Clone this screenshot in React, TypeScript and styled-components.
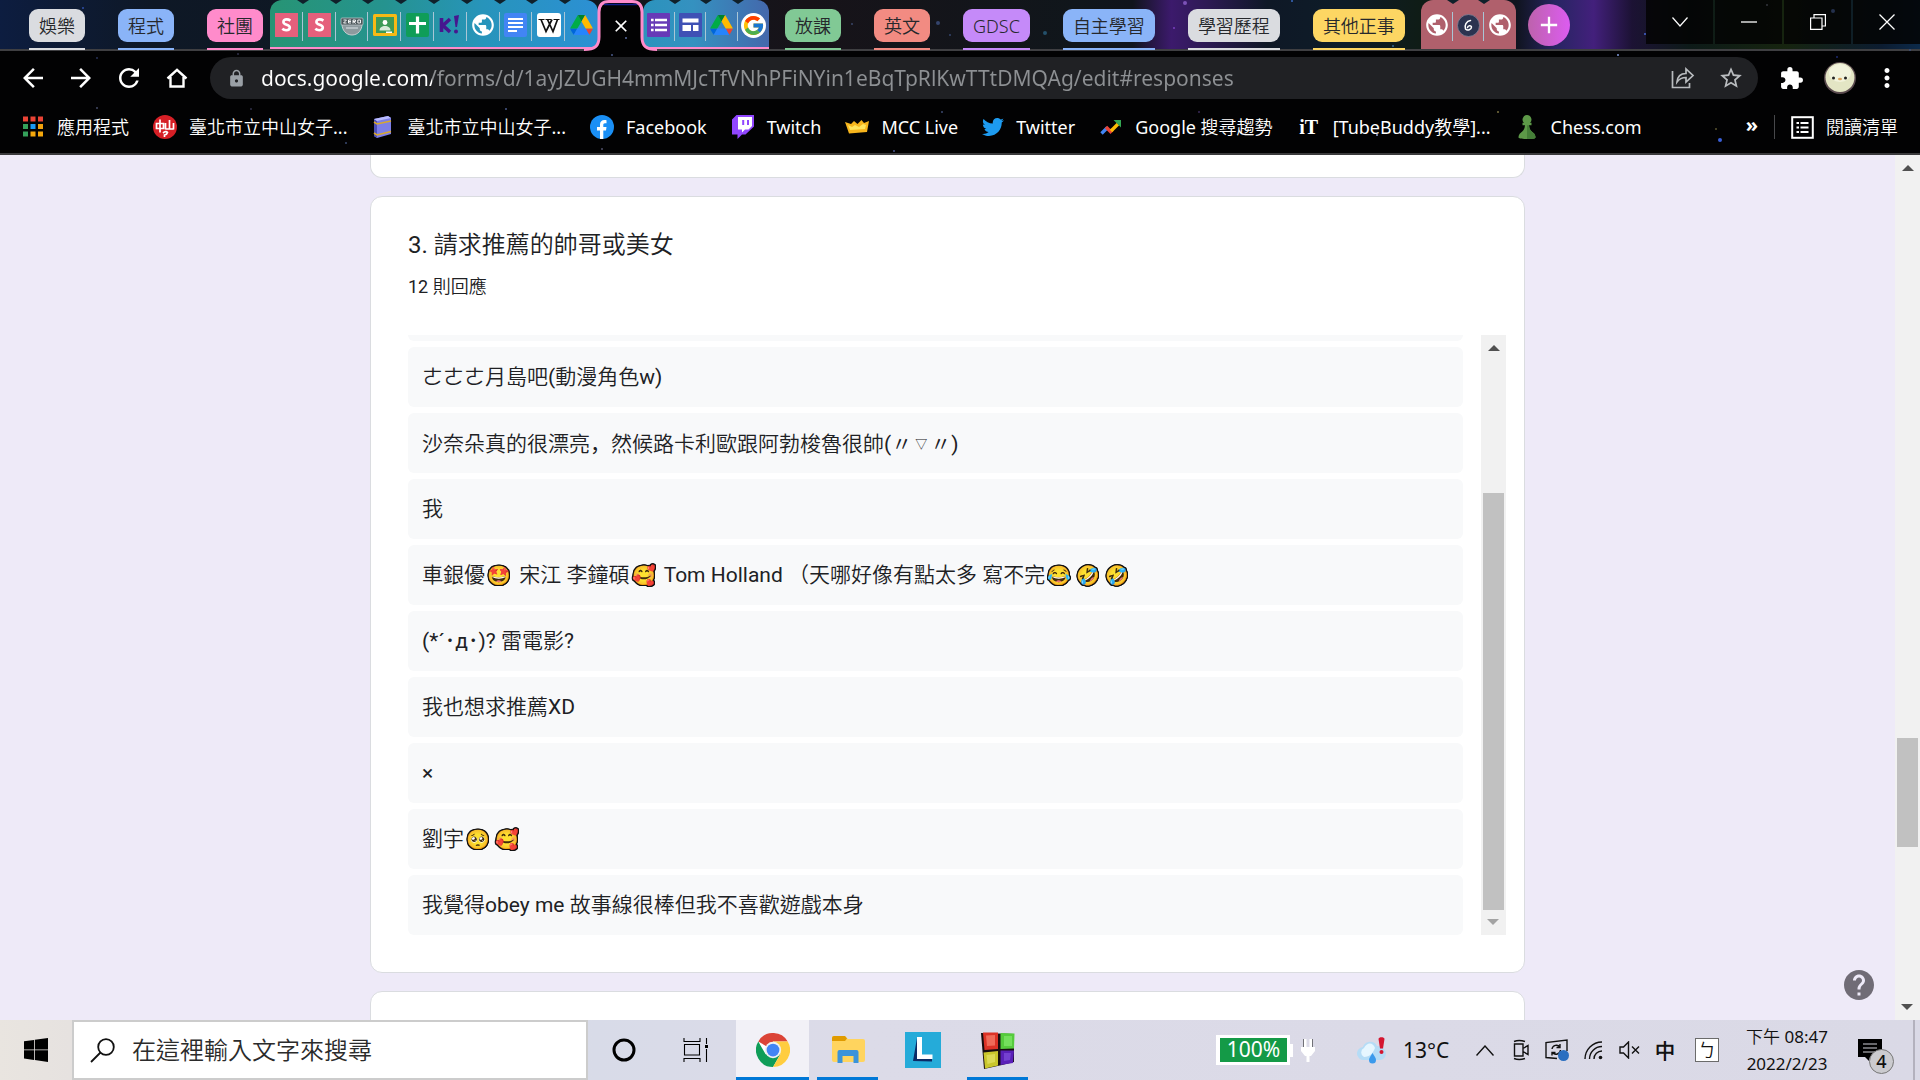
import React from 'react';
import styled, { createGlobalStyle } from 'styled-components';
import {
  MdArrowBack,
  MdArrowForward,
  MdRefresh,
  MdLock,
  MdStarBorder,
  MdExtension,
  MdMoreVert,
  MdHelp,
  MdPublic,
  MdAdd,
  MdClose,
} from 'react-icons/md';
import { FaTwitter } from 'react-icons/fa';
import { FcGoogle } from 'react-icons/fc';

const UI_FONT = '"Noto Sans", "Noto Sans CJK TC DemiLight", "Noto Sans CJK TC", sans-serif';
const FORM_FONT = 'Roboto, "Noto Sans CJK TC DemiLight", "Noto Sans CJK TC", sans-serif';

const GlobalStyle = createGlobalStyle`
  *, *::before, *::after { box-sizing: border-box; }
  body { margin: 0; background: #eeeaf8; font-family: ${UI_FONT}; }
  button, input { font: inherit; color: inherit; border: 0; padding: 0; margin: 0; background: none; }
  a { color: inherit; text-decoration: none; }
  svg { display: block; flex: none; }
`;

const Screen = styled.div`
  display: flex;
  flex-direction: column;
  height: 100vh;
  overflow: hidden;
`;

/* ---------- Browser chrome ---------- */

const BrowserHeader = styled.header`
  position: relative;
  display: flex;
  flex-direction: column;
  background: #020203;
  border-bottom: 2px solid #3a3a3c;
  color: #fff;
`;

const Stars = styled.svg`
  position: absolute;
  inset: 0;
  width: 100%;
  height: 100%;
  pointer-events: none;
`;

const TabStrip = styled.nav`
  display: flex;
  height: 51px;
  padding-left: 29px;
  border-bottom: 2px solid #3f3f42;
  background: linear-gradient(
    90deg,
    #0d1d40 0%,
    #0e1826 8%,
    #10171f 30%,
    #171319 42%,
    #10161b 56%,
    #10141c 59%,
    #3c1a6c 61%,
    #2c1a52 63%,
    #0e1826 66%,
    #0e1c28 70%,
    #0f1c16 74%,
    #10141f 79%,
    #272562 81%,
    #43207c 83%,
    #1c1234 85%,
    #0d1a18 88%,
    #16240f 93%,
    #0c1c30 98%,
    #0c2a4a 100%
  );
`;

const ChipRow = styled.div<{ $before?: number }>`
  display: flex;
  gap: 33px;
  margin-left: ${(p) => p.$before ?? 0}px;
`;

const GroupChip = styled.button<{ $color: string }>`
  position: relative;
  align-self: flex-start;
  height: 33px;
  margin-top: 9px;
  padding: 0 10px;
  border-radius: 9px;
  background: ${(p) => p.$color};
  color: #26282c;
  font-size: 18px;
  font-weight: 300;
  line-height: 32px;
  white-space: nowrap;

  &::after {
    content: '';
    position: absolute;
    left: 0;
    right: 0;
    top: 39px;
    height: 2px;
    background: ${(p) => p.$color};
  }
`;

const TabGroup = styled.div<{ $width: number; $before?: number; $fill: string; $line?: string }>`
  display: flex;
  width: ${(p) => p.$width}px;
  margin-left: ${(p) => p.$before ?? 0}px;
  background: ${(p) => p.$fill};
  border-radius: 12px 12px 0 0;
  border-bottom: 2px solid ${(p) => p.$line ?? 'transparent'};
`;

const Tab = styled.button`
  position: relative;
  flex: 1;
  display: flex;
  align-items: center;
  justify-content: center;
  padding-top: 3px;

  & + &::before {
    content: '';
    position: absolute;
    left: -1px;
    top: 12px;
    width: 1px;
    height: 29px;
    background: #a9c6d6;
  }
  & + &::after {
    content: '';
    position: absolute;
    left: -6px;
    top: 0;
    border: 6px solid transparent;
    border-top: 4px solid #10202a;
    border-bottom: 0;
  }
`;

const ActiveTab = styled.button`
  position: relative;
  display: flex;
  align-items: center;
  justify-content: center;
  width: 45px;
  height: 51px;
`;

const ActiveTabShape = styled.svg`
  position: absolute;
  left: -14px;
  top: 0;
`;

const ActiveTabClose = styled(MdClose)`
  position: relative;
`;

const NewTab = styled.button`
  display: flex;
  align-items: center;
  justify-content: center;
  width: 42px;
  height: 42px;
  margin: 4px 0 0 12px;
  border-radius: 50%;
  background: linear-gradient(90deg, #bd62ac, #dc5cf0);
`;

const WindowControls = styled.div`
  display: flex;
  gap: 2px;
  height: 44px;
  margin-left: auto;
`;

const WindowButton = styled.button`
  display: flex;
  align-items: center;
  justify-content: center;
  width: 67px;
  background: rgba(3, 3, 3, 0.86);
`;

const Toolbar = styled.div`
  display: flex;
  align-items: center;
  height: 54px;
  padding: 0 11px 0 9px;
`;

const ToolButton = styled.button`
  display: flex;
  align-items: center;
  justify-content: center;
  width: 48px;
  height: 42px;
`;

const Omnibox = styled.label`
  flex: 1;
  display: flex;
  align-items: center;
  height: 42px;
  margin: 0 9px;
  padding: 0 3px 0 17px;
  border-radius: 21px;
  background: #202124;
  color: #9aa0a6;
`;

const UrlField = styled.input`
  flex: 1;
  min-width: 0;
  margin-left: 15px;
  height: 34px;
  font-size: 21px;
  outline: 0;
  color: transparent;
  background: linear-gradient(90deg, #fff 171px, #8d9093 171px);
  -webkit-background-clip: text;
  background-clip: text;
`;

const Avatar = styled.button`
  display: flex;
  margin: 0 9px;
`;

const MenuButton = styled(ToolButton)`
  width: 44px;
`;

const BookmarkBar = styled.nav`
  display: flex;
  align-items: center;
  gap: 24px;
  height: 48px;
  padding: 0 22px 4px 21px;
`;

const Bookmark = styled.a`
  display: flex;
  align-items: center;
  gap: 12px;
  font-size: 18px;
  line-height: 24px;
  white-space: nowrap;
`;

const MoreBookmarks = styled.button`
  margin-left: auto;
  padding-bottom: 4px;
  font-size: 20px;
  font-weight: 700;
  line-height: 24px;
`;

const ReadingList = styled(Bookmark)`
  margin-left: -8px;
  padding-left: 16px;
  border-left: 1px solid #47484b;
`;

/* ---------- Form page ---------- */

const Viewport = styled.div`
  position: relative;
  flex: 1;
  min-height: 0;
  display: flex;
  background: #eeeaf8;
`;

const FormPage = styled.main`
  flex: 1;
  min-width: 0;
  display: flex;
  flex-direction: column;
  align-items: center;
  gap: 18px;
  overflow: hidden;
  font-family: ${FORM_FONT};
  color: #202124;
`;

const Card = styled.section`
  flex: none;
  width: 100%;
  max-width: 1155px;
  border: 1px solid #dadce0;
  border-radius: 12px;
  background: #fff;
`;

const CardEnd = styled(Card)`
  height: 23px;
  border-top: 0;
  border-radius: 0 0 12px 12px;
`;

const NextCard = styled(Card)`
  height: 60px;
`;

const QuestionCard = styled(Card)`
  padding: 32px 18px 37px 37px;
`;

const QuestionTitle = styled.h2`
  margin: 0;
  font-size: 24px;
  font-weight: 400;
  line-height: 32px;
`;

const ResponseCount = styled.p`
  margin: 14px 0 36px;
  font-size: 18px;
  line-height: 24px;
`;

const Responses = styled.div`
  display: flex;
  gap: 18px;
  height: 600px;
`;

const ResponseList = styled.ul`
  flex: 1;
  min-width: 0;
  display: flex;
  flex-direction: column;
  justify-content: flex-end;
  gap: 6px;
  overflow: hidden;
  margin: 0;
  padding: 0;
  list-style: none;
`;

const Response = styled.li`
  flex: none;
  display: flex;
  align-items: center;
  height: 60px;
  padding: 0 14px;
  border-radius: 6px;
  background: #f8f9fa;
  font-size: 21px;
  line-height: 30px;
  white-space: pre;
`;

const LowComma = styled.span`
  font-family: 'Noto Sans CJK SC', sans-serif;
`;

const SmallMark = styled.span`
  display: inline-block;
  width: 18px;
  font-size: 12px;
  text-align: center;
  vertical-align: 2px;
`;

const ScrollTrack = styled.div`
  flex: none;
  display: flex;
  flex-direction: column;
  align-items: center;
  width: 25px;
  background: #f1f1f1;
`;

const ScrollArrow = styled.button<{ $down?: boolean; $muted?: boolean }>`
  display: flex;
  align-items: center;
  justify-content: center;
  width: 25px;
  height: 25px;
  color: ${(p) => (p.$muted ? '#a3a3a3' : '#505050')};
  transform: ${(p) => (p.$down ? 'rotate(180deg)' : 'none')};
`;

const ScrollSpace = styled.div<{ $grow: number }>`
  flex: ${(p) => p.$grow} 0 0;
`;

const ScrollThumb = styled.div<{ $grow: number }>`
  flex: ${(p) => p.$grow} 0 0;
  width: 21px;
  background: #c1c1c1;
`;

const HelpButton = styled.button`
  position: absolute;
  right: 43px;
  bottom: 17px;
  color: #706c76;
`;

/* ---------- Taskbar ---------- */

const Taskbar = styled.footer`
  display: flex;
  height: 60px;
  background: linear-gradient(90deg, #e9e5e0 0%, #e4e0e0 6%, #d8dbe8 31%, #dcdbe8 45%, #dad9e6 100%);
  color: #111;
`;

const TaskButton = styled.button<{ $active?: boolean; $open?: boolean; $width?: number }>`
  position: relative;
  display: flex;
  align-items: center;
  justify-content: center;
  width: ${(p) => p.$width ?? 73}px;
  background: ${(p) => (p.$active ? '#f2f1f7' : 'transparent')};

  &::after {
    content: '';
    position: absolute;
    bottom: 0;
    left: ${(p) => (p.$active ? 0 : 6)}px;
    right: ${(p) => (p.$active ? 0 : 6)}px;
    height: 3px;
    background: ${(p) => (p.$open ? '#0078d7' : 'transparent')};
  }
`;

const SearchBox = styled.label`
  display: flex;
  align-items: center;
  gap: 17px;
  width: 516px;
  padding-left: 16px;
  border: 2px solid #cccccc;
  background: #fff;
`;

const SearchField = styled.input`
  flex: 1;
  min-width: 0;
  height: 42px;
  padding-bottom: 2px;
  font-size: 24px;
  font-weight: 300;
  outline: 0;

  &::placeholder {
    color: #2b2b2b;
    opacity: 1;
  }
`;

const PinnedApps = styled.div`
  display: flex;
  gap: 2px;
  margin-left: 4px;
`;

const Tray = styled.div`
  display: flex;
  margin-left: auto;
`;

const PowerStatus = styled.div`
  display: flex;
  align-items: center;
  gap: 11px;
  width: 124px;
`;

const Battery = styled.div`
  position: relative;
  width: 74px;
  height: 30px;
  border: 3px solid #fff;
  border-width: 3px 3px 3px 4px;
  background: #149a47;
  color: #fff;
  font-size: 21px;
  line-height: 22px;
  text-align: center;

  &::after {
    content: '';
    position: absolute;
    right: -6px;
    top: 6px;
    width: 3px;
    height: 13px;
    background: #fff;
  }
`;

const Weather = styled.button`
  display: flex;
  align-items: center;
  gap: 15px;
  width: 127px;
  padding-left: 17px;
  font-size: 21px;
`;

const TrayButton = styled.button<{ $width?: number }>`
  display: flex;
  align-items: center;
  justify-content: center;
  width: ${(p) => p.$width ?? 36}px;
  font-size: 20px;
  font-weight: 700;
`;

const ImeBadge = styled.span`
  display: flex;
  align-items: center;
  justify-content: center;
  width: 24px;
  height: 24px;
  border: 1px solid #6b6b6b;
  background: #fff;
  font-size: 18px;
  font-weight: 400;
  line-height: 22px;
`;

const Clock = styled.button`
  width: 112px;
  font-size: 17px;
  line-height: 27px;
  text-align: center;
`;

const NoticeButton = styled.button`
  position: relative;
  width: 72px;
  padding-left: 15px;
  border-right: 2px solid #b3b1bd;
  margin-right: 5px;
`;

const NoticeCount = styled.span`
  position: absolute;
  left: 26px;
  top: 29px;
  width: 25px;
  height: 25px;
  border: 1px solid #777;
  border-radius: 50%;
  background: #cbcbcf;
  font-size: 18px;
  font-weight: 500;
  line-height: 23px;
  text-align: center;
`;

/* ---------- Drawings ---------- */

const SheetS = () => (
  <svg width="23" height="24" viewBox="0 0 23 24">
    <rect width="23" height="24" fill="#e5607c" />
    <path d="M15.4 7.6C14.3 6.8 13 6.4 11.6 6.4c-2 0-3.2 1-3.2 2.5 0 3.4 6.4 2.3 6.4 5.6 0 1.7-1.5 2.7-3.6 2.7-1.600 0-2.900-.5-3.900-1.400" fill="none" stroke="#fff" strokeWidth="2.6" />
  </svg>
);
const ZeroBadge = () => (
  <svg width="24" height="24" viewBox="0 0 24 24">
    <path d="M2 11h20c0 6-4 11-10 11S2 17 2 11z" fill="#8d9a9e" stroke="#c9cfd2" />
    <rect x="1" y="5" width="22" height="7" rx="1" fill="#4d585c" stroke="#b9c2c5" strokeWidth=".8" />
    <path d="M3.500 7h3l-3 3h3M11 7H8.500v3H11M8.500 8.500H11M13 10.500V7h2.500v1.500H13l2.800 2M17.800 7h2.700v3h-2.700z" fill="none" stroke="#fff" strokeWidth=".9" />
    <path d="M6 15h12" stroke="#b5bfc3" strokeWidth="2" />
  </svg>
);
const Classroom = () => (
  <svg width="24" height="22" viewBox="0 0 24 22">
    <rect width="24" height="22" rx="1.500" fill="#f6b916" />
    <rect x="3" y="3" width="18" height="16" fill="#3c9a57" />
    <circle cx="12" cy="8.500" r="2.400" fill="#fff" />
    <path d="M6.500 16.500c0-3 2.500-4.500 5.500-4.500s5.500 1.500 5.500 4.500z" fill="#d6ead9" />
    <path d="M13 19h6v-1.500h-6z" fill="#fff" />
  </svg>
);
const SheetsPlus = () => (
  <svg width="23" height="24" viewBox="0 0 23 24">
    <rect width="23" height="24" rx="2" fill="#0f9d58" />
    <path d="M11.500 3.500v17M3 10.500h17" stroke="#fff" strokeWidth="3.200" />
  </svg>
);
const Kahoot = () => (
  <svg width="22" height="20" viewBox="0 0 22 20">
    <path d="M2.500 3v14M11 4l-7 6.500L11 17" fill="none" stroke="#46178f" strokeWidth="3.600" />
    <path d="M15 1l5-1-2 12h-1.500z" fill="#46178f" />
    <circle cx="17" cy="16.500" r="2" fill="#46178f" />
  </svg>
);
const Globe = () => <MdPublic size={26} color="#fff" />;
const Docs = () => (
  <svg width="23" height="24" viewBox="0 0 23 24">
    <rect width="23" height="24" rx="2" fill="#4285f4" />
    <path d="M4 6h15M4 10h15M4 14h15M4 18h9" stroke="#fff" strokeWidth="2.200" />
  </svg>
);
const Wikipedia = () => (
  <svg width="24" height="24" viewBox="0 0 24 24">
    <rect width="24" height="24" rx="3" fill="#fff" />
    <path d="M1.500 6.500h6M8.500 6.500h5.500M16.500 6.500h6" stroke="#111" strokeWidth="1.200" />
    <path d="M4 6.500l5 12 6-12M10.500 6.500l5.500 12 4.500-12" fill="none" stroke="#111" strokeWidth="1.700" />
  </svg>
);
const Drive = () => (
  <svg width="23" height="20" viewBox="0 0 87.300 78">
    <path d="M6.600 66.850l3.850 6.650c.8 1.400 1.950 2.500 3.300 3.300l13.750-23.800H0c0 1.550.4 3.100 1.200 4.500z" fill="#0066da" />
    <path d="M43.650 25L29.900 1.200c-1.350.8-2.500 1.900-3.300 3.300l-25.400 44A9 9 0 000 53h27.500z" fill="#00ac47" />
    <path d="M73.550 76.800c1.350-.8 2.500-1.900 3.300-3.300l1.600-2.750L86.100 57.500c.8-1.400 1.200-2.950 1.200-4.500H59.800l5.850 11.500z" fill="#ea4335" />
    <path d="M43.650 25L57.400 1.200C56.050.4 54.500 0 52.900 0H34.400c-1.600 0-3.150.45-4.500 1.200z" fill="#00832d" />
    <path d="M59.800 53H27.500L13.750 76.800c1.350.8 2.900 1.200 4.500 1.200h50.800c1.600 0 3.150-.45 4.500-1.200z" fill="#2684fc" />
    <path d="M73.400 26.500l-12.700-22c-.8-1.400-1.950-2.500-3.300-3.300L43.650 25 59.800 53h27.450c0-1.550-.4-3.100-1.200-4.500z" fill="#ffba00" />
  </svg>
);
const FormsIcon = () => (
  <svg width="23" height="24" viewBox="0 0 23 24">
    <rect width="23" height="24" rx="1" fill="#673ab7" />
    <path d="M4 7h2.600M4 12h2.600M4 17h2.600M8 7h12M8 12h12M8 17h12" stroke="#fff" strokeWidth="2.600" />
  </svg>
);
const SitesIcon = () => (
  <svg width="23" height="24" viewBox="0 0 23 24">
    <rect width="23" height="24" rx="1" fill="#3f51b5" />
    <path d="M3.500 5.500h16v4h-16zM3.500 12h8.500v6H3.500zM14 12h5.500v6H14z" fill="#fff" />
  </svg>
);
const GoogleG = () => (
  <svg width="25" height="25" viewBox="0 0 25 25">
    <circle cx="12.500" cy="12.500" r="12.500" fill="#fff" />
    <g transform="translate(1 1)">
      <FcGoogle size={23} />
    </g>
  </svg>
);
const RoundG = () => (
  <svg width="23" height="23" viewBox="0 0 23 23">
    <circle cx="11.500" cy="11.500" r="11" fill="#2b3350" stroke="#8a8398" strokeWidth=".8" />
    <path d="M13.500 6.500C9.500 7 7 11.500 8.500 15c2 2 6 .5 6-2 0-1.800-3.500-1.500-4 .5" fill="none" stroke="#fff" strokeWidth="1.500" strokeLinecap="round" />
  </svg>
);
const HomeIcon = () => (
  <svg width="22" height="20" viewBox="0 0 22 20" fill="none" stroke="#fff" strokeWidth="2.400">
    <path d="M1.500 10.500L11 1.800l9.500 8.700M4.500 9v9.500h13V9" />
  </svg>
);
const AppsGrid = () => (
  <svg width="24" height="24" viewBox="0 0 24 24">
    {['#ea4335', '#ea4335', '#ea4335', '#34a05a', '#1a9af5', '#f0a00c', '#34a05a', '#f5a80c', '#f5a80c'].map((c, i) => (
      <rect key={i} x={2 + (i % 3) * 7.500} y={1.500 + Math.floor(i / 3) * 7.500} width="5" height="5" fill={c} />
    ))}
  </svg>
);
const SchoolSeal = () => (
  <svg width="24" height="24" viewBox="0 0 24 24">
    <circle cx="12" cy="12" r="12" fill="#d61f26" />
    <path d="M3.500 8.500h7v5h-7zM7 4.500v13M12.500 8v6.500M12.500 14h8M16.500 5v9M20.500 8v6.500M10 18q3-2.500 4.500-.5-.5 2-3 2.500v2" fill="none" stroke="#fff" strokeWidth="1.700" />
  </svg>
);
const BookIcon = () => (
  <svg width="24" height="24" viewBox="0 0 24 24">
    <path d="M3 4L17 1l3 2v16L6 23l-3-2z" fill="#7d7fe8" />
    <path d="M3 4l3 2v17l-3-2z" fill="#4c4fb8" />
    <path d="M3 4L17 1l3 2L6 6z" fill="#b9bbff" />
    <path d="M3 7l3 2 14-3M3 18l3 2 14-3.500" fill="none" stroke="#d9a92c" strokeWidth="1.600" />
  </svg>
);
const FacebookIcon = () => (
  <svg width="24" height="24" viewBox="0 0 24 24">
    <circle cx="12" cy="12" r="12" fill="#1a8ff5" />
    <path d="M10 24v-8.500H7V12h3V9.500C10 6.500 11.800 5 14.500 5c1 0 2 .2 2 .2v3h-1.500c-1.300 0-1.700.8-1.700 1.700V12h3.200l-.5 3.500h-2.700V24z" fill="#fff" />
  </svg>
);
const TwitchIcon = () => (
  <svg width="24" height="24" viewBox="0 0 24 24">
    <path d="M5.500 0L1 4.500v15h5.500V24l4.500-4.500h3.500L23 11.500V0z" fill="#9146ff" />
    <path d="M7 2h14v9l-3.500 3.500H14l-3 3v-3H7z" fill="#fff" />
    <path d="M12.200 5v5M17 5v5" stroke="#9146ff" strokeWidth="2" />
  </svg>
);
const PawnIcon = () => (
  <svg width="24" height="24" viewBox="0 0 24 24">
    <path d="M12 0a4.500 4.500 0 0 1 3 7.800h1.500v2.400H14c.3 4 2 5.800 4.500 7.800 1.200 1 2 2.500 2 4.500 0 1-3 1.500-8.500 1.500s-8.500-.5-8.500-1.500c0-2 .8-3.500 2-4.500C8 16 9.700 14.200 10 10.200H7.500V7.800H9A4.500 4.500 0 0 1 12 0z" fill="#5d9948" />
    <path d="M12 10.200h2c.3 4 2 5.800 4.500 7.800 1.200 1 2 2.500 2 4.500 0 1-3 1.500-8.500 1.500z" fill="#457f38" />
  </svg>
);
const Crown = () => (
  <svg width="24" height="24" viewBox="0 0 24 24">
    <path d="M0 7l6 2 3-3 3.500 3 4-4 2.500 3 5-2-2 11-18 1.500z" fill="#f7b51c" />
    <path d="M3 10l4 2 3-2 4 2 4-3 3 1-1 4-15 1z" fill="#ffe45c" />
  </svg>
);
const Trends = () => (
  <svg width="24" height="24" viewBox="0 0 24 24">
    <path d="M2.500 18.500l6-6" stroke="#4285f4" strokeWidth="3.400" />
    <path d="M7 12l4.500 4.500 2-2" fill="none" stroke="#ea4335" strokeWidth="3.400" />
    <path d="M12 16l7-7" stroke="#fbbc04" strokeWidth="3.400" />
    <path d="M14.500 5H22v7.500z" fill="#34a853" />
  </svg>
);
const ItMark = styled.span`
  width: 24px;
  font-family: 'Liberation Serif', serif;
  font-size: 20px;
  font-weight: 700;
  line-height: 24px;
  text-align: center;
`;
const ReadingIcon = () => (
  <svg width="23" height="23" viewBox="0 0 23 23" fill="none" stroke="#fff">
    <rect x="1.200" y="1.200" width="20.600" height="20.600" strokeWidth="2" />
    <path d="M5.500 7h2.500M5.500 11.500h2.500M5.500 16h2.500M9.500 7h8M9.500 11.500h8M9.500 16h8" strokeWidth="2" />
  </svg>
);
const ShareIcon = () => (
  <svg width="24" height="24" viewBox="0 0 24 24" fill="none" stroke="#b9bcbf" strokeWidth="1.700">
    <path d="M1.500 5v16.500h17V17" />
    <path d="M6 16c.5-6 4-8.500 9-8.500V3l7 6.500-7 6.500v-4.500C11 11.500 8.500 12.500 6 16z" />
  </svg>
);
const DuckAvatar = () => (
  <svg width="32" height="32" viewBox="0 0 32 32">
    <circle cx="16" cy="16" r="16" fill="#5a4a4e" />
    <circle cx="16" cy="15.500" r="14.500" fill="#e3e5c4" />
    <ellipse cx="16" cy="11" rx="11" ry="9" fill="#f2f3dc" />
    <circle cx="9.500" cy="16" r="1.500" fill="#222" />
    <circle cx="21.500" cy="16" r="1.500" fill="#222" />
    <ellipse cx="16" cy="17" rx="2" ry="1.200" fill="#d9a25c" />
  </svg>
);
const Triangle = () => (
  <svg width="12" height="6" viewBox="0 0 12 6">
    <path d="M0 6l6-6 6 6z" fill="currentColor" />
  </svg>
);
const WindowsLogo = () => (
  <svg width="24" height="24" viewBox="0 0 24 24">
    <path d="M0 3.300l10-1.400v9.600H0zM10.800 1.800L24 0v11.500H10.800zM0 12.300h10v9.600L0 20.500zM10.800 12.300H24V24l-13.200-1.900z" fill="#000" />
  </svg>
);
const SearchGlyph = () => (
  <svg width="25" height="25" viewBox="0 0 25 25" fill="none" stroke="#111" strokeWidth="1.800">
    <circle cx="16" cy="9" r="7.800" />
    <path d="M10.500 14.500L1 24" />
  </svg>
);
const CortanaRing = () => (
  <svg width="24" height="24" viewBox="0 0 24 24">
    <circle cx="12" cy="12" r="10" fill="none" stroke="#000" strokeWidth="3" />
  </svg>
);
const TaskViewGlyph = () => (
  <svg width="26" height="24" viewBox="0 0 26 24" fill="none" stroke="#000" strokeWidth="1.100">
    <path d="M1 0v3.500h16V0M1 24v-3.500h16V24M1.500 6.500h15v10.500h-15zM23.500 0v6M23.500 11v13" />
    <rect x="22" y="7" width="3" height="3" fill="#000" stroke="none" />
  </svg>
);
const ChromeLogo = () => (
  <svg width="34" height="34" viewBox="0 0 48 48">
    <circle cx="24" cy="24" r="24" fill="#fff" />
    <path d="M24 24L3.200 12A24 24 0 0 1 44.800 12L24 12z" fill="#db4437" />
    <path d="M3.200 12A24 24 0 0 0 24 48L34.400 30 13.600 30z" fill="#0f9d58" />
    <path d="M44.800 12A24 24 0 0 1 24 48L34.400 30 24 12z" fill="#ffcd40" />
    <circle cx="24" cy="24" r="11.500" fill="#f1f1f1" />
    <circle cx="24" cy="24" r="9" fill="#4285f4" />
  </svg>
);
const FolderLogo = () => (
  <svg width="34" height="28" viewBox="0 0 34 28">
    <path d="M1 2a2 2 0 0 1 2-2h11l3 3h15a2 2 0 0 1 2 2v19a2 2 0 0 1-2 2H3a2 2 0 0 1-2-2z" fill="#ffd45e" />
    <path d="M1 5V2a2 2 0 0 1 2-2h11l2 2.500L14 5z" fill="#e09b00" />
    <path d="M6.500 27V16a2 2 0 0 1 2-2h17a2 2 0 0 1 2 2v11h-5v-7h-11v7z" fill="#3b93da" />
  </svg>
);
const LAppLogo = () => (
  <svg width="36" height="36" viewBox="0 0 36 36">
    <rect width="36" height="36" fill="#25abd9" />
    <path d="M12 6L8 29l19 .5V26H12z" fill="#0c2b66" />
    <path d="M12 5h5v17.500h10.500V27H12z" fill="#fff" />
  </svg>
);
const BlocksLogo = () => (
  <svg width="36" height="37" viewBox="0 0 36 37">
    <path d="M1 1l33 1v28l-12 3-18 4z" fill="#170d10" />
    <path d="M3 .5h15v16.500L4.500 18z" fill="#dc3226" />
    <path d="M20.500 1l14 .5-.5 15-13.500.5z" fill="#55cb3c" />
    <path d="M3.500 20.500L18 19v14.500L5 36.500z" fill="#c9c62c" />
    <path d="M20.500 18.500H34L33 31l-12.500 2z" fill="#5a20b8" />
    <path d="M6 3.500l9-.5v10.500L7 14z" fill="#ef6a58" />
    <path d="M24 4h8v10h-8z" fill="#74e05c" />
    <path d="M6.500 23l8.500-1v8l-7.500 2z" fill="#dcda55" />
    <path d="M24 21h7l-1 7-6 1z" fill="#7440d0" />
  </svg>
);
const Plug = () => (
  <svg width="14" height="24" viewBox="0 0 14 24">
    <path d="M3 1h2.500v8H3zM8.500 1H11v8H8.500zM0 9h14v4l-4 5H8.500v6h-3v-6H4l-4-5z" fill="#fff" />
    <path d="M2.500 1v8M11.500 1v8" stroke="#55555a" strokeWidth=".8" />
  </svg>
);
const WeatherIcon = () => (
  <svg width="31" height="27" viewBox="0 0 31 27">
    <path d="M7 23a6.500 6.500 0 0 1-1-13C7 4.500 17 2 20 9c9-1 13 12 3 14z" fill="#b5dcf6" />
    <path d="M7 20a5 5 0 0 1 0-9c3-6 9-6 11 0-2 5-5 9-11 9z" fill="#e6f6ff" />
    <path d="M15.500 16c-2 3.500-3.500 5-3.500 7a3.500 3.500 0 0 0 7 0c0-2-1.500-3.500-3.500-7z" fill="#3b9aec" />
    <path d="M21.500 2c0-2.500 6-2.500 6 0l-1.500 9.500h-3z" fill="#d4152f" />
    <circle cx="24.500" cy="15" r="2" fill="#d4152f" />
  </svg>
);
const TrayGlyph = styled.svg`
  fill: none;
  stroke: #111;
  stroke-width: 1.4;
`;

type Mark = 'star' | 'love' | 'joy' | 'rofl' | 'plead';

const EmojiChar = styled.span`
  display: inline-block;
  width: 29px;
  font-family: 'Noto Color Emoji', sans-serif;
  font-size: 19px;
  text-align: center;
  filter: drop-shadow(1px 0 0 #111) drop-shadow(-1px 0 0 #111) drop-shadow(0 1px 0 #111) drop-shadow(0 -1px 0 #111);
`;
const EMOJI: Record<Mark, string> = { star: '🤩', love: '🥰', joy: '😂', rofl: '🤣', plead: '🥺' };
const Emoji = ({ k }: { k: Mark }) => <EmojiChar>{EMOJI[k]}</EmojiChar>;

const STARS: [number, number, number, string][] = [
  [83, 8, 1, '#2f4fa8'], [97, 58, 1, '#283258'], [97, 108, 1, '#454a66'], [238, 54, 1, '#30304a'],
  [251, 109, 1, '#30304a'], [346, 143, 1, '#3a4a70'], [506, 109, 1, '#4a5a8a'], [602, 149, 1, '#50506a'],
  [612, 55, 1, '#4a5a8a'], [626, 38, 1, '#5a6aa0'], [852, 24, 1, '#3a4668'], [938, 23, 2, '#34446c'],
  [950, 35, 1, '#34446c'], [894, 151, 1, '#4a5a90'], [942, 112, 1, '#3c4a70'], [1045, 33, 2, '#24506a'],
  [1174, 28, 1, '#7a3fc0'], [1185, 3, 2, '#7c52b8'], [1199, 112, 1, '#3a2a5a'], [1292, 1, 1, '#3a6ac0'],
  [1393, 46, 1, '#3a6a90'], [1377, 135, 1, '#8fa0d0'], [1498, 112, 1, '#7a7040'], [1618, 55, 1, '#7f98d8'],
  [1645, 34, 1, '#4466d0'], [1716, 129, 1, '#5a5430'], [1720, 140, 2, '#3a5fd8'], [1767, 5, 1, '#33363c'],
  [1833, 11, 2, '#24304c'], [1837, 57, 1, '#1c2a70'], [1910, 50, 1, '#40507a'],
];

const leftTabs = [SheetS, SheetS, ZeroBadge, Classroom, SheetsPlus, Kahoot, Globe, Docs, Wikipedia, Drive];
const rightTabs = [FormsIcon, SitesIcon, Drive, GoogleG];
const redTabs = [Globe, RoundG, Globe];

const bookmarks: { label: string; icon: React.ReactNode }[] = [
  { label: '應用程式', icon: <AppsGrid /> },
  { label: '臺北市立中山女子...', icon: <SchoolSeal /> },
  { label: '臺北市立中山女子...', icon: <BookIcon /> },
  { label: 'Facebook', icon: <FacebookIcon /> },
  { label: 'Twitch', icon: <TwitchIcon /> },
  { label: 'MCC Live', icon: <Crown /> },
  { label: 'Twitter', icon: <FaTwitter size={22} color="#1d9bf0" /> },
  { label: 'Google 搜尋趨勢', icon: <Trends /> },
  { label: '[TubeBuddy教學]...', icon: <ItMark>iT</ItMark> },
  { label: 'Chess.com', icon: <PawnIcon /> },
];

const responses: React.ReactNode[] = [
  '',
  'ㄜㄜㄜ月島吧(動漫角色w)',
  <>沙奈朵真的很漂亮<LowComma lang="zh-Hans">，</LowComma>然候路卡利歐跟阿勃梭魯很帥(〃<SmallMark>▽</SmallMark>〃)</>,
  '我',
  <>車銀優<Emoji k="star" /> 宋江 李鐘碩<Emoji k="love" /> Tom Holland （天哪好像有點太多 寫不完<Emoji k="joy" /><Emoji k="rofl" /><Emoji k="rofl" /></>,
  '(*´･д･)? 雷電影?',
  '我也想求推薦XD',
  '×',
  <>劉宇<Emoji k="plead" /><Emoji k="love" /></>,
  '我覺得obey me 故事線很棒但我不喜歡遊戲本身',
];

export default function App() {
  return (
    <Screen>
      <GlobalStyle />
      <BrowserHeader>
        <TabStrip aria-label="分頁">
          <ChipRow>
            <GroupChip $color="#dadce0">娛樂</GroupChip>
            <GroupChip $color="#8ab4f8">程式</GroupChip>
            <GroupChip $color="#ff8bcb">社團</GroupChip>
          </ChipRow>
          <TabGroup $width={328} $before={7} $line="#ff8bcb" $fill="linear-gradient(90deg, #279474, #25938f 35%, #2794bb 65%, #2c90d4)">
            {leftTabs.map((Icon, i) => (
              <Tab key={i} aria-label={`分頁 ${i + 1}`}>
                <Icon />
              </Tab>
            ))}
          </TabGroup>
          <ActiveTab aria-label="關閉分頁">
            <ActiveTabShape width="73" height="51" viewBox="0 0 73 51">
              <path d="M0 51V49C10 49 14 46 14 38V12C14 5 18 1 25 1H48C55 1 59 5 59 12V38C59 46 63 49 73 49V51z" fill="#020203" />
              <path d="M0 49.500C11 49.500 15 46 15 37V12C15 5 18 1.500 25 1.500H48C55 1.500 58 5 58 12V37C58 46 62 49.500 73 49.500" fill="none" stroke="#ff8bcb" strokeWidth="3" />
              <path d="M20 4.500H53" stroke="#101f8c" strokeWidth="1.500" />
            </ActiveTabShape>
            <ActiveTabClose size={20} />
          </ActiveTab>
          <TabGroup $width={126} $line="#ff8bcb" $fill="linear-gradient(90deg, #2b93bd, #3591c0 40%, #4468ac)">
            {rightTabs.map((Icon, i) => (
              <Tab key={i} aria-label={`分頁 ${i + 12}`}>
                <Icon />
              </Tab>
            ))}
          </TabGroup>
          <ChipRow $before={16}>
            <GroupChip $color="#81c995">放課</GroupChip>
            <GroupChip $color="#f28b82">英文</GroupChip>
            <GroupChip $color="#c58af9">GDSC</GroupChip>
            <GroupChip $color="#8ab4f8">自主學習</GroupChip>
            <GroupChip $color="#dadce0">學習歷程</GroupChip>
            <GroupChip $color="#fdd663">其他正事</GroupChip>
          </ChipRow>
          <TabGroup $width={95} $before={16} $fill="#b0606c">
            {redTabs.map((Icon, i) => (
              <Tab key={i} aria-label={`分頁 ${i + 16}`}>
                <Icon />
              </Tab>
            ))}
          </TabGroup>
          <NewTab aria-label="新分頁">
            <MdAdd size={28} />
          </NewTab>
          <WindowControls>
            <WindowButton aria-label="搜尋分頁">
              <svg width="16" height="10" viewBox="0 0 16 10" fill="none" stroke="#fff" strokeWidth="1.200"><path d="M.5.500L8 9 15.500.500" /></svg>
            </WindowButton>
            <WindowButton aria-label="最小化">
              <svg width="16" height="2" viewBox="0 0 16 2"><path d="M0 1h16" stroke="#fff" strokeWidth="1.300" /></svg>
            </WindowButton>
            <WindowButton aria-label="還原">
              <svg width="16" height="16" viewBox="0 0 16 16" fill="none" stroke="#fff" strokeWidth="1.200"><path d="M.6 4h11.400v11.400H.6zM4 4V.6h11.400V12H12" /></svg>
            </WindowButton>
            <WindowButton aria-label="關閉">
              <svg width="16" height="16" viewBox="0 0 16 16" stroke="#fff" strokeWidth="1.300"><path d="M.5.500l15 15M15.500.500l-15 15" /></svg>
            </WindowButton>
          </WindowControls>
        </TabStrip>
        <Toolbar>
          <ToolButton aria-label="上一頁"><MdArrowBack size={30} /></ToolButton>
          <ToolButton aria-label="下一頁"><MdArrowForward size={30} /></ToolButton>
          <ToolButton aria-label="重新載入"><MdRefresh size={30} /></ToolButton>
          <ToolButton aria-label="首頁"><HomeIcon /></ToolButton>
          <Omnibox>
            <MdLock size={19} aria-hidden />
            <UrlField aria-label="網址" defaultValue="docs.google.com/forms/d/1ayJZUGH4mmMJcTfVNhPFiNYin1eBqTpRlKwTTtDMQAg/edit#responses" />
            <ToolButton aria-label="分享"><ShareIcon /></ToolButton>
            <ToolButton aria-label="加入書籤"><MdStarBorder size={26} color="#b9bcbf" /></ToolButton>
          </Omnibox>
          <ToolButton aria-label="擴充功能"><MdExtension size={25} /></ToolButton>
          <Avatar aria-label="個人資料"><DuckAvatar /></Avatar>
          <MenuButton aria-label="選單"><MdMoreVert size={30} /></MenuButton>
        </Toolbar>
        <BookmarkBar aria-label="書籤">
          {bookmarks.map((b, i) => (
            <Bookmark key={i} href="#">
              {b.icon}
              <span>{b.label}</span>
            </Bookmark>
          ))}
          <MoreBookmarks>»</MoreBookmarks>
          <ReadingList href="#">
            <ReadingIcon />
            <span>閱讀清單</span>
          </ReadingList>
        </BookmarkBar>
        <Stars aria-hidden>
          {STARS.map(([x, y, r, c], i) => (
            <circle key={i} cx={x} cy={y} r={r} fill={c} />
          ))}
        </Stars>
      </BrowserHeader>

      <Viewport>
        <FormPage>
          <CardEnd />
          <QuestionCard>
            <QuestionTitle>3. 請求推薦的帥哥或美女</QuestionTitle>
            <ResponseCount>12 則回應</ResponseCount>
            <Responses>
              <ResponseList>
                {responses.map((r, i) => (
                  <Response key={i}><span>{r}</span></Response>
                ))}
              </ResponseList>
              <ScrollTrack>
                <ScrollArrow aria-label="向上捲動"><Triangle /></ScrollArrow>
                <ScrollSpace $grow={133} />
                <ScrollThumb $grow={417} />
                <ScrollArrow $down $muted aria-label="向下捲動"><Triangle /></ScrollArrow>
              </ScrollTrack>
            </Responses>
          </QuestionCard>
          <NextCard />
        </FormPage>
        <ScrollTrack>
          <ScrollArrow aria-label="向上捲動"><Triangle /></ScrollArrow>
          <ScrollSpace $grow={558} />
          <ScrollThumb $grow={109} />
          <ScrollSpace $grow={148} />
          <ScrollArrow $down aria-label="向下捲動"><Triangle /></ScrollArrow>
        </ScrollTrack>
        <HelpButton aria-label="說明"><MdHelp size={36} /></HelpButton>
      </Viewport>

      <Taskbar>
        <TaskButton $width={72} aria-label="開始"><WindowsLogo /></TaskButton>
        <SearchBox>
          <SearchGlyph />
          <SearchField aria-label="搜尋" placeholder="在這裡輸入文字來搜尋" />
        </SearchBox>
        <TaskButton $width={72} aria-label="Cortana"><CortanaRing /></TaskButton>
        <TaskButton $width={72} aria-label="工作檢視"><TaskViewGlyph /></TaskButton>
        <PinnedApps>
          <TaskButton $active $open aria-label="Chrome"><ChromeLogo /></TaskButton>
          <TaskButton $open aria-label="檔案總管"><FolderLogo /></TaskButton>
          <TaskButton aria-label="L"><LAppLogo /></TaskButton>
          <TaskButton $open aria-label="Blocks"><BlocksLogo /></TaskButton>
        </PinnedApps>
        <Tray>
          <PowerStatus>
            <Battery>100%</Battery>
            <Plug />
          </PowerStatus>
          <Weather><WeatherIcon />13°C</Weather>
          <TrayButton aria-label="顯示隱藏的圖示">
            <TrayGlyph width="18" height="11" viewBox="0 0 18 11"><path d="M.5 10.500L9 1l8.500 9.500" /></TrayGlyph>
          </TrayButton>
          <TrayButton aria-label="攝影機">
            <TrayGlyph width="18" height="22" viewBox="0 0 18 22"><path d="M2.500 5h8.500v12H2.500zM11 9.500l5-3v9l-5-3M2 2.500Q7 .5 13 2.500M2 19.500Q7 21.500 13 19.500" /></TrayGlyph>
          </TrayButton>
          <TrayButton aria-label="同步">
            <TrayGlyph width="24" height="22" viewBox="0 0 24 22">
              <path d="M12 19.500L1 18.500V3.500L22 1v11M7 10a4.500 4.500 0 0 1 8-2M15 5v3.500h-3.500M15.500 11a4.500 4.500 0 0 1-8 2.500M7 16.500v-3h3.500" />
              <circle cx="18.500" cy="16.500" r="5.500" fill="#2b6fc0" stroke="none" />
            </TrayGlyph>
          </TrayButton>
          <TrayButton aria-label="網路">
            <TrayGlyph width="19" height="19" viewBox="0 0 19 19">
              <path d="M1 18A17 17 0 0 1 18 1M5.500 18A12.500 12.500 0 0 1 18 5.500M10 18a8 8 0 0 1 8-8" />
              <circle cx="16.500" cy="16.500" r="1.800" fill="#111" stroke="none" />
            </TrayGlyph>
          </TrayButton>
          <TrayButton aria-label="靜音">
            <TrayGlyph width="21" height="18" viewBox="0 0 21 18"><path d="M1 6h3.500L9.500 1v16l-5-5H1zM13 5.500l7 7M20 5.500l-7 7" /></TrayGlyph>
          </TrayButton>
          <TrayButton>中</TrayButton>
          <TrayButton $width={48}><ImeBadge>ㄅ</ImeBadge></TrayButton>
          <Clock>下午 08:47<br />2022/2/23</Clock>
          <NoticeButton aria-label="通知">
            <svg width="24" height="23" viewBox="0 0 24 23">
              <path d="M0 0h24v18H12l-1 4-4-4H0z" fill="#000" />
              <path d="M5 5h14M5 9h14M5 13h14" stroke="#cfcfd6" strokeWidth="1" />
            </svg>
            <NoticeCount>4</NoticeCount>
          </NoticeButton>
        </Tray>
      </Taskbar>
    </Screen>
  );
}
